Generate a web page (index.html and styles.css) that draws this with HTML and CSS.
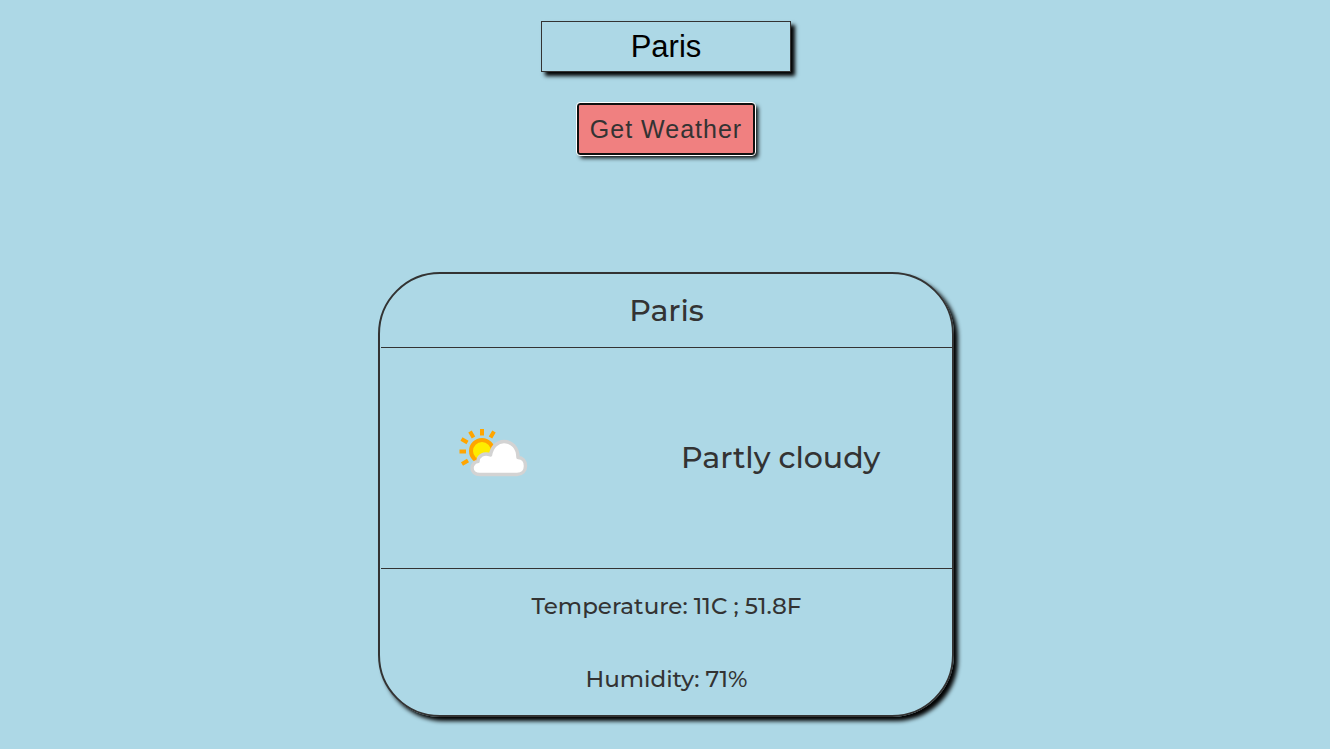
FILE: index.html
```html
<!DOCTYPE html>
<html lang="en">
<head>
  <meta charset="utf-8">
  <meta name="viewport" content="width=device-width, initial-scale=1">
  <title>Weather</title>
  <link rel="stylesheet" href="styles.css">
</head>
<body>
  <form class="search">
    <input class="search-input" type="text" value="Paris" aria-label="City">
    <button class="search-button" type="button">Get Weather</button>
  </form>
  <main class="card">
    <h1 class="city">Paris</h1>
    <section class="condition">
      <div class="condition-cell">
        <svg class="condition-icon" viewBox="1 0 72 60" aria-hidden="true">
          <g stroke="#ffa500" stroke-width="4">
            <path d="M24 1v6.500M12 3.500l3.500 6M36 3.500l-3.500 6M3.500 11l6 3.500M1.500 23.500h6.500M4 36l6-3.500"/>
          </g>
          <circle cx="24" cy="23" r="11" fill="#ffec00" stroke="#ffa500" stroke-width="4"/>
          <path d="M22 46.500C17 46.500 14 43.500 14 40C14 36.500 17 33.500 20 33.500C20 28 26 24 32.500 27C34 18 40 13.500 46 13.500C54 13.500 60 20 60 29.500C64.500 29.500 67.500 33 67.500 38C67.500 43 64 46.500 59 46.500Z" fill="#fff" stroke="#d3d3d3" stroke-width="3.500" stroke-linejoin="round"/>
        </svg>
      </div>
      <p class="condition-cell condition-text">Partly cloudy</p>
    </section>
    <section class="details">
      <p class="detail">Temperature: 11C ; 51.8F</p>
      <p class="detail">Humidity: 71%</p>
    </section>
  </main>
</body>
</html>
```
FILE: styles.css
```css
* {
  box-sizing: border-box;
  margin: 0;
}

body {
  display: flex;
  flex-direction: column;
  align-items: center;
  padding: 21px 16px 32px 18px;
  background: #add8e6;
  color: #333;
  font-family: Montserrat, Inter, sans-serif;
  font-weight: 500;
}

.search {
  display: flex;
  flex-direction: column;
  align-items: center;
  gap: 31px;
  margin-bottom: 117px;
}

.search-input {
  width: 250px;
  padding: 6px;
  border: 1px solid #333;
  background: #add8e6;
  box-shadow: 4px 4px 4px #000;
  color: #000;
  font: 31px/37px "Liberation Sans", Arial, sans-serif;
  text-align: center;
}

.search-button {
  padding: 10px 11px;
  border: 2px solid #101010;
  border-radius: 3px;
  outline: 1px solid #fff;
  background: #f08080;
  box-shadow: 3px 3px 4px #000;
  color: #333;
  font: 25px/28px "Liberation Sans", Arial, sans-serif;
  letter-spacing: 1px;
}

.card {
  width: 100%;
  max-width: 576px;
  padding-left: 1px;
  border: 2px solid #333;
  border-radius: 62px;
  box-shadow: 4px 4px 4px #000;
}

.city {
  padding: 16px;
  border-bottom: 1px solid #333;
  font-size: 30px;
  font-weight: 500;
  line-height: 41px;
  text-align: center;
}

.condition {
  display: grid;
  grid-template-columns: 2fr 3fr;
  align-items: center;
  min-height: 221px;
  border-bottom: 1px solid #333;
}

.condition-cell {
  display: flex;
  justify-content: center;
}

.condition-icon {
  width: 72px;
}

.condition-text {
  font-size: 30px;
  line-height: 40px;
}

.details {
  text-align: center;
}

.detail {
  padding: 21px 20px 19px;
  font-size: 23px;
  line-height: 33px;
}
```
